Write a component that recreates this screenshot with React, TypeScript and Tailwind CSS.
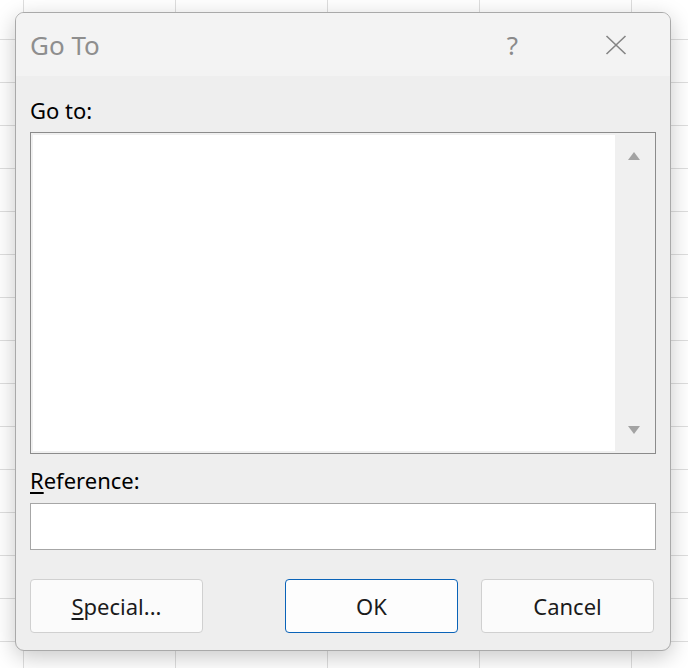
import React from "react";

const FONT = { fontFamily: '"Noto Sans", "Open Sans", sans-serif' };

function CloseIcon() {
  return (
    <svg width="22" height="20" viewBox="0 0 22 20" fill="none">
      <path d="M1.5 1 L20.5 19 M20.5 1 L1.5 19" stroke="#858585" strokeWidth="1.6" />
    </svg>
  );
}

function DialogButton({
  children,
  primary = false,
}: {
  children: React.ReactNode;
  primary?: boolean;
}) {
  return (
    <button
      type="button"
      className={`h-[54px] w-[173px] rounded-[4px] border text-[22px] leading-[28px] text-[#1b1b1b] ${
        primary ? "border-[#0a63b8] bg-[#fdfdfd]" : "border-[#d0d0d0] bg-[#fbfbfb]"
      }`}
    >
      {children}
    </button>
  );
}

export default function App() {
  return (
    <div
      style={FONT}
      className="h-[668px] w-[688px] overflow-hidden bg-white bg-[linear-gradient(to_right,#dedede_1px,transparent_1px),linear-gradient(to_bottom,#dedede_1px,transparent_1px)] bg-[size:152px_43px] bg-[position:23px_39px] pl-[15px] pt-[12px]"
    >
      {/* Dialog */}
      <div className="flex h-[639px] w-[656px] flex-col overflow-hidden rounded-[9px] border border-[#a9a9a9] bg-[#eeeeee] shadow-[0_6px_22px_rgba(0,0,0,0.22)]">
        {/* Title bar */}
        <div className="flex h-[63px] shrink-0 items-center bg-[#f3f3f3] pl-[14px]">
          <span className="text-[26px] leading-[32px] text-[#8e8e8e]">Go To</span>
          <span className="ml-auto mr-[87px] text-[26px] leading-[32px] text-[#8a8a8a]">?</span>
          <span className="mr-[43px] flex items-center">
            <CloseIcon />
          </span>
        </div>

        {/* Body */}
        <div className="flex flex-1 flex-col px-[14px] pt-[20px]">
          <label className="text-[22px] leading-[28px] text-black">Go to:</label>

          {/* List box */}
          <div className="mt-[8px] flex h-[322px] w-[626px] border border-[#8b8b8b] bg-[#f0f0f0] p-[2px]">
            <div className="flex-1 bg-white" />
            <div className="flex w-[38px] flex-col items-center justify-between py-[17px]">
              <svg width="12" height="8" viewBox="0 0 12 8">
                <path d="M6 0 L12 8 L0 8 Z" fill="#a3a3a3" />
              </svg>
              <svg width="12" height="8" viewBox="0 0 12 8">
                <path d="M0 0 L12 0 L6 8 Z" fill="#a3a3a3" />
              </svg>
            </div>
          </div>

          <label className="mt-[12px] text-[22px] leading-[28px] text-black">
            <span className="underline decoration-[1.5px] underline-offset-[3px]">R</span>
            eference:
          </label>

          <input
            type="text"
            className="mt-[9px] h-[47px] w-[626px] border border-[#a6a6a6] bg-white outline-none"
          />

          {/* Buttons */}
          <div className="mt-[29px] flex items-center">
            <DialogButton>
              <span className="underline decoration-[1.5px] underline-offset-[3px]">S</span>
              pecial...
            </DialogButton>
            <div className="ml-auto flex gap-[23px] pr-[2px]">
              <DialogButton primary>OK</DialogButton>
              <DialogButton>Cancel</DialogButton>
            </div>
          </div>
        </div>
      </div>
    </div>
  );
}
